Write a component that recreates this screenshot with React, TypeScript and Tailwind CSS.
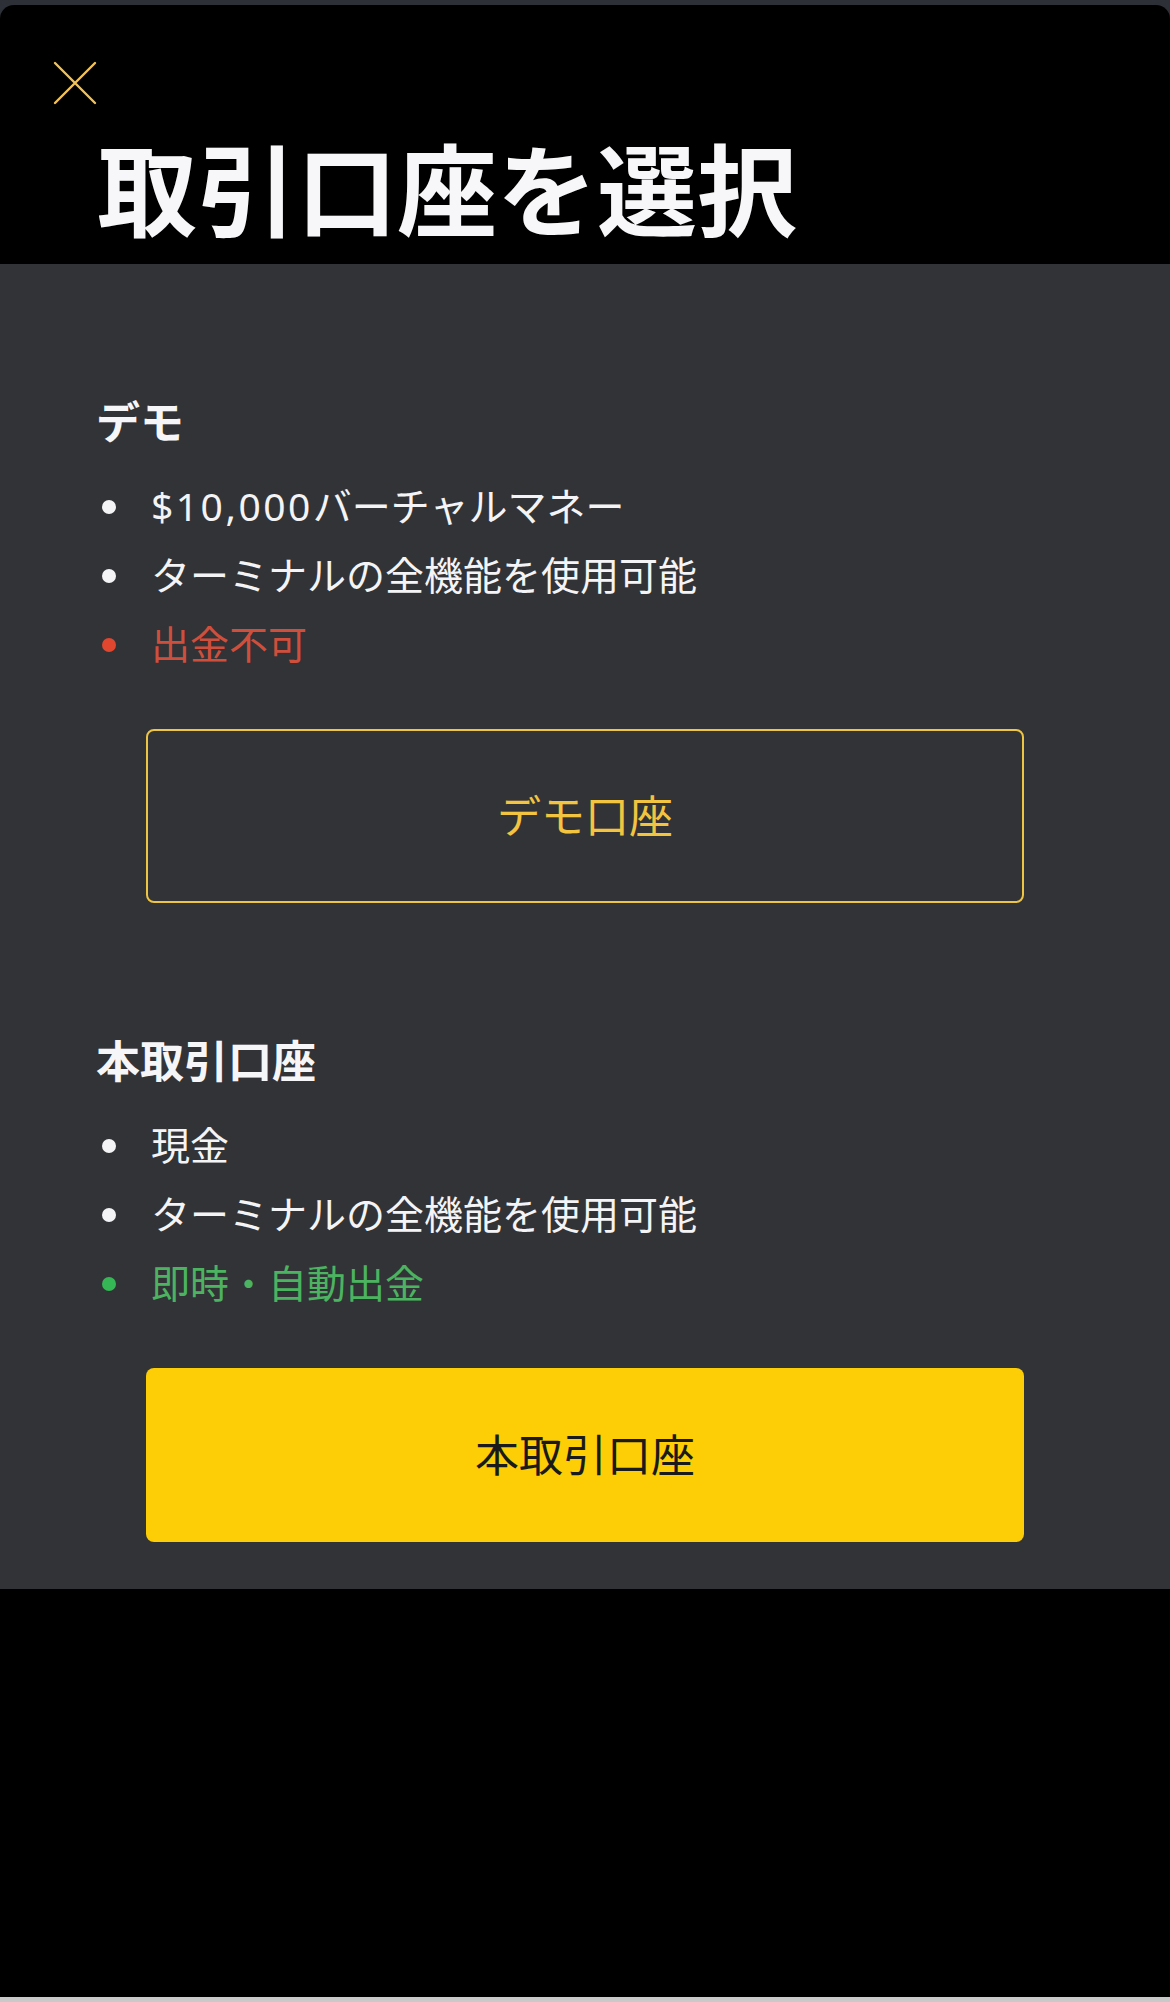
import React from "react";

const FONT = { fontFamily: '"Noto Sans", "Noto Sans CJK JP", sans-serif' };

type Item = { text: React.ReactNode; key: string; tone: "white" | "red" | "green" };

function Bullet({ item }: { item: Item }) {
  const dot =
    item.tone === "red" ? "bg-[#e1462e]" : item.tone === "green" ? "bg-[#36b755]" : "bg-[#f4f4f6]";
  const txt =
    item.tone === "red" ? "text-[#cf4f3c]" : item.tone === "green" ? "text-[#4cb360]" : "text-[#f4f4f6]";
  return (
    <div className="flex h-[69px] items-center pl-[102px]">
      <span className={`block h-[14px] w-[14px] translate-y-[1px] rounded-full ${dot}`} />
      <span className={`ml-[35px] text-[39px] leading-[69px] ${txt}`}>{item.text}</span>
    </div>
  );
}

function Section({
  title,
  items,
  button,
  primary,
}: {
  title: string;
  items: Item[];
  button: string;
  primary?: boolean;
}) {
  return (
    <section className="flex flex-col pt-[136px]">
      <h2 className="pl-[96px] text-[44px] font-bold leading-[44px] text-[#f6f6f8]">{title}</h2>
      <div className="mt-[27px] flex flex-col">
        {items.map((it) => (
          <Bullet key={it.key} item={it} />
        ))}
      </div>
      <div className="mt-[51px] px-[146px]">
        {primary ? (
          <button className="flex h-[174px] w-full items-center justify-center rounded-[8px] bg-[#fdcd06] text-[44px] text-[#1a1a1a]">
            {button}
          </button>
        ) : (
          <button className="flex h-[174px] w-full items-center justify-center rounded-[8px] border-[2.5px] border-[#eec445] bg-transparent text-[44px] text-[#f2c440]">
            {button}
          </button>
        )}
      </div>
    </section>
  );
}

export default function App() {
  return (
    <div className="flex h-[2002px] w-[1170px] flex-col bg-[#2d3036]" style={FONT}>
      <div className="h-[5px] shrink-0" />
      <header className="flex shrink-0 flex-col rounded-t-[14px] bg-black pb-[24px] pl-[53px] pt-[56px]">
        <svg width="44" height="44" viewBox="0 0 44 44" fill="none">
          <path d="M2 2 L42 42 M42 2 L2 42" stroke="#f3c256" strokeWidth="2.4" strokeLinecap="round" />
        </svg>
        <h1 className="mt-[35px] pl-[44px] text-[100px] font-bold leading-[100px] text-[#f7f7f9]">
          取引口座を選択
        </h1>
      </header>
      <main className="flex shrink-0 flex-col bg-[#323337] pb-[47px]">
        <Section
          title="デモ"
          items={[
            {
              key: "a",
              text: (
                <>
                  <span className="tracking-[2.5px]">$10,000</span>バーチャルマネー
                </>
              ),
              tone: "white",
            },
            { key: "b", text: "ターミナルの全機能を使用可能", tone: "white" },
            { key: "c", text: "出金不可", tone: "red" },
          ]}
          button="デモ口座"
        />
        <Section
          title="本取引口座"
          items={[
            { key: "a", text: "現金", tone: "white" },
            { key: "b", text: "ターミナルの全機能を使用可能", tone: "white" },
            { key: "c", text: "即時・自動出金", tone: "green" },
          ]}
          button="本取引口座"
          primary
        />
      </main>
      <div className="flex-1 bg-black" />
      <div className="h-[5px] shrink-0 bg-[#c9c9c9]" />
    </div>
  );
}
